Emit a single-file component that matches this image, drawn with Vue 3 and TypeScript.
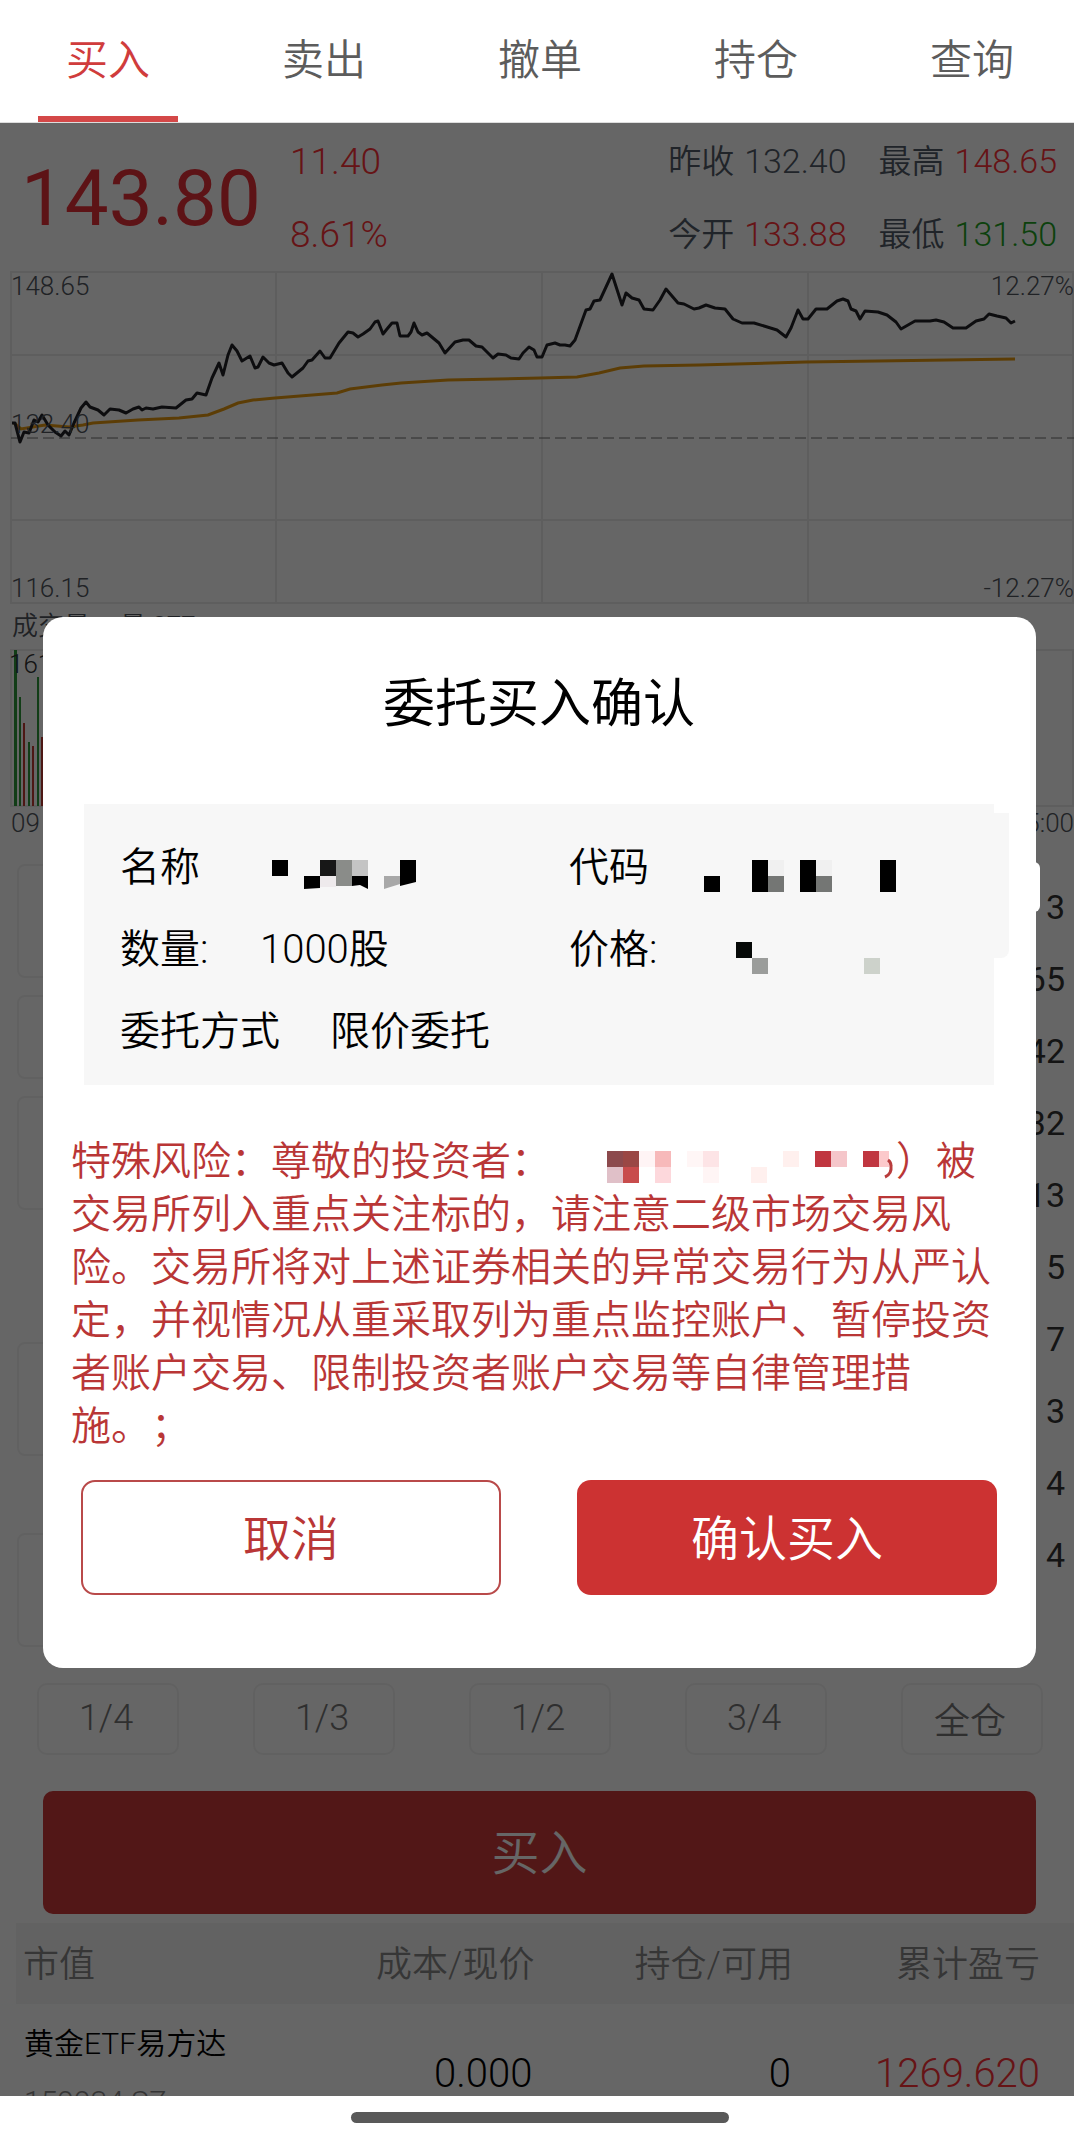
<script setup lang="ts">
import { ref } from 'vue'

interface Quote { label: string; value: string; tone: 'flat' | 'up' | 'down' }
interface Cell { x: number; y: number; w?: number; h?: number; fill: string }
interface Bar { x: number; w: number; top: number; up: boolean }

const tabs = ['买入', '卖出', '撤单', '持仓', '查询']
const activeTab = ref('买入')

const quotes: Quote[] = [
  { label: '昨收', value: '132.40', tone: 'flat' },
  { label: '最高', value: '148.65', tone: 'up' },
  { label: '今开', value: '133.88', tone: 'up' },
  { label: '最低', value: '131.50', tone: 'down' },
]

const priceLine =
  '12,163 15,163 20,182 24,172 29,173 34,160 38,162 42,155 48,165 55,172 61,176 65,171 69,175 74,163 81,148 86,142 90,147 98,150 104,155 110,149 119,150 126,153 133,149 139,147 142,150 146,148 153,149 162,147 176,148 186,140 192,139 197,133 206,135 212,118 219,103 223,115 228,95 232,85 237,91 242,101 250,96 255,108 258,107 263,97 269,103 274,105 282,103 288,113 292,117 303,108 308,101 312,100 320,91 325,98 330,98 339,83 348,72 353,73 358,77 363,74 370,69 375,62 378,61 383,74 387,69 392,63 397,63 400,76 408,76 411,72 414,63 418,72 422,75 427,73 439,83 445,93 455,82 463,80 469,80 476,86 482,87 493,98 498,94 506,95 511,98 519,99 523,93 529,87 534,90 537,97 542,97 547,85 555,83 560,85 565,85 570,86 575,80 586,50 590,49 594,41 600,40 612,14 622,45 626,33 632,38 639,40 644,49 653,50 660,40 666,29 678,43 684,44 694,49 699,48 706,45 715,48 725,49 733,59 742,63 754,63 777,70 786,77 791,68 798,50 803,59 808,59 816,49 827,49 837,41 843,39 848,41 851,49 856,51 860,59 865,51 878,52 887,55 896,62 901,69 915,61 930,61 936,60 944,62 953,68 966,68 976,61 984,59 989,54 997,56 1006,58 1011,63 1015,61'
const averageLine =
  '14,163 21,169 45,165 69,167 83,165 93,163 138,160 179,158 208,155 224,149 238,143 253,140 275,138 337,133 350,129 382,125 401,123 448,120 540,118 577,117 599,113 620,108 644,106 699,105 806,102 878,101 1015,99'

const bars: Bar[] = [
  { x: 14, w: 3, top: 4, up: false },
  { x: 19, w: 2, top: 51, up: false },
  { x: 23, w: 2, top: 77, up: true },
  { x: 28, w: 2, top: 96, up: false },
  { x: 32, w: 2, top: 100, up: true },
  { x: 37, w: 2, top: 31, up: false },
  { x: 41, w: 2, top: 91, up: true },
]

const depth = ['3', '65', '42', '32', '13', '5', '7', '3', '4', '4']
const fractions = ['1/4', '1/3', '1/2', '3/4', '全仓']

const nameMask: Cell[] = [
  { x: 0, y: 0, fill: '#000' },
  { x: 48, y: 0, fill: '#171717' },
  { x: 64, y: 0, h: 26, fill: '#8a8c89' },
  { x: 80, y: 0, fill: '#c4c4c4' },
  { x: 48, y: 16, h: 11, fill: '#eeeaec' },
]
const codeMask: Cell[] = [
  { x: 0, y: 16, fill: '#000' },
  { x: 48, y: 0, h: 32, fill: '#000' },
  { x: 64, y: 0, fill: '#f0f0f0' },
  { x: 64, y: 16, fill: '#747674' },
  { x: 96, y: 0, h: 32, fill: '#000' },
  { x: 112, y: 0, fill: '#f0f0f0' },
  { x: 112, y: 16, fill: '#747674' },
  { x: 176, y: 0, h: 32, fill: '#000' },
]
const priceMask: Cell[] = [
  { x: 32, y: 0, fill: '#060908' },
  { x: 48, y: 16, fill: '#9b9d9b' },
  { x: 160, y: 16, fill: '#cdd2cb' },
]
const riskMask: Cell[] = [
  { x: 56, y: 0, fill: '#8c4a4d' },
  { x: 72, y: 0, fill: '#9a4744' },
  { x: 56, y: 16, fill: '#e0c0c8' },
  { x: 72, y: 16, fill: '#c84c4c' },
  { x: 88, y: 0, fill: '#fff4f5' },
  { x: 104, y: 0, fill: '#f7b9ba' },
  { x: 104, y: 16, fill: '#fdd8dc' },
  { x: 136, y: 0, fill: '#fff6f6' },
  { x: 152, y: 0, fill: '#fde4e6' },
  { x: 152, y: 16, fill: '#fff5f5' },
  { x: 200, y: 16, fill: '#fff0ee' },
  { x: 232, y: 0, fill: '#fff0ee' },
  { x: 264, y: 0, fill: '#c03640' },
  { x: 280, y: 0, fill: '#f5c6ca' },
  { x: 312, y: 0, fill: '#c03640' },
  { x: 328, y: 0, w: 10, fill: '#fcc9cb' },
]
</script>

<template>
  <div class="app">
    <nav class="tabs">
      <button
        v-for="tab in tabs"
        :key="tab"
        type="button"
        class="tab"
        :class="{ active: tab === activeTab }"
        @click="activeTab = tab"
      >{{ tab }}</button>
    </nav>

    <main class="stage">
      <section class="quote">
        <strong class="last">143.80</strong>
        <div class="change"><span>11.40</span><span>8.61%</span></div>
        <dl class="stats">
          <div v-for="q in quotes" :key="q.label" class="stat">
            <dt>{{ q.label }}</dt>
            <dd :class="q.tone">{{ q.value }}</dd>
          </div>
        </dl>
      </section>

      <section class="chart">
        <svg viewBox="0 0 1074 346" fill="none">
          <g stroke="#ebebeb" stroke-width="2">
            <path d="M11 12H1073V343H11ZM11 95H1073M11 260H1073M276 12V343M542 12V343M808 12V343" />
          </g>
          <path d="M11 178H1074" stroke="#707070" stroke-width="1" stroke-dasharray="11 5" />
          <polyline :points="averageLine" stroke="#e79a10" stroke-width="3" />
          <polyline :points="priceLine" stroke="#222226" stroke-width="3" stroke-linejoin="round" />
        </svg>
        <span class="axis top-left">148.65</span>
        <span class="axis mid-left">132.40</span>
        <span class="axis bottom-left">116.15</span>
        <span class="axis top-right">12.27%</span>
        <span class="axis bottom-right">-12.27%</span>
      </section>

      <section class="volume">
        <div class="volume-title"><span>成交量</span><span>量 277</span></div>
        <div class="volume-plot">
          <svg viewBox="0 0 1074 164" fill="none">
            <path d="M11 4H1073V160H11Z" stroke="#ebebeb" stroke-width="2" />
            <rect
              v-for="b in bars"
              :key="b.x"
              :x="b.x"
              :y="b.top"
              :width="b.w"
              :height="160 - b.top"
              :fill="b.up ? '#c03a34' : '#2f9a3a'"
            />
          </svg>
          <span class="axis volume-max">161</span>
        </div>
        <div class="times"><span>09</span><span>15:00</span></div>
      </section>

      <section class="trade">
        <div class="form">
          <div class="field tall"></div>
          <div class="field short"></div>
          <div class="field tall"></div>
          <div class="field tall spaced"></div>
          <div class="field tall last-field"></div>
        </div>
        <ol class="depth">
          <li v-for="(d, i) in depth" :key="i">{{ d }}</li>
        </ol>
      </section>

      <div class="fractions">
        <button v-for="f in fractions" :key="f" type="button">{{ f }}</button>
      </div>

      <button type="button" class="buy">买入</button>

      <table class="holdings">
        <thead>
          <tr><th>市值</th><th>成本/现价</th><th>持仓/可用</th><th>累计盈亏</th></tr>
        </thead>
        <tbody>
          <tr>
            <td><div class="fund">黄金ETF易方达</div><div class="ticker">159934.SZ</div></td>
            <td>0.000</td>
            <td>0</td>
            <td class="up">1269.620</td>
          </tr>
        </tbody>
      </table>

      <div class="overlay">
        <div class="dialog" role="dialog" aria-modal="true" aria-labelledby="dialog-title">
          <h2 id="dialog-title">委托买入确认</h2>

          <div class="order">
            <div class="row">
              <div class="item">
                <span>名称</span>
                <svg class="mask name-mask" width="144" height="32" viewBox="0 0 144 32">
                  <rect v-for="(c, i) in nameMask" :key="i" :x="c.x" :y="c.y" :width="c.w ?? 16" :height="c.h ?? 16" :fill="c.fill" />
                  <path d="M32 16H48V28L32 29Z" />
                  <path d="M80 16H96V29L88 25L80 26Z" />
                  <path d="M112 16H128V24L112 29Z" fill="#a8a8a8" />
                  <path d="M128 0H144V22L128 26Z" />
                </svg>
              </div>
              <div class="item">
                <span>代码</span>
                <svg class="mask code-mask" width="192" height="32" viewBox="0 0 192 32">
                  <rect v-for="(c, i) in codeMask" :key="i" :x="c.x" :y="c.y" :width="c.w ?? 16" :height="c.h ?? 16" :fill="c.fill" />
                </svg>
              </div>
            </div>
            <div class="row">
              <div class="item"><span class="label">数量:</span><span>1000股</span></div>
              <div class="item">
                <span>价格:</span>
                <svg class="mask price-mask" width="176" height="32" viewBox="0 0 176 32">
                  <rect v-for="(c, i) in priceMask" :key="i" :x="c.x" :y="c.y" :width="c.w ?? 16" :height="c.h ?? 16" :fill="c.fill" />
                </svg>
              </div>
            </div>
            <div class="row">
              <div class="item method"><span>委托方式</span><span>限价委托</span></div>
            </div>
          </div>

          <p class="risk">特殊风险：尊敬的投资者：<svg class="risk-mask" width="345" height="32" viewBox="0 0 345 32"><rect v-for="(c, i) in riskMask" :key="i" :x="c.x" :y="c.y" :width="c.w ?? 16" :height="c.h ?? 16" :fill="c.fill" /><path d="M334 26Q341 23 340 15Q340 11 337 9" fill="none" stroke="#b93c3c" stroke-width="3" /></svg>）被交易所列入重点关注标的，请注意二级市场交易风险。交易所将对上述证券相关的异常交易行为从严认定，并视情况从重采取列为重点监控账户、暂停投资者账户交易、限制投资者账户交易等自律管理措施。；</p>

          <div class="actions">
            <button type="button" class="cancel">取消</button>
            <button type="button" class="confirm">确认买入</button>
          </div>
        </div>
      </div>
    </main>

    <footer class="home"><span class="home-bar"></span></footer>
  </div>
</template>

<style>
body {
  margin: 0;
  background: #fff;
}
</style>

<style scoped>
* {
  box-sizing: border-box;
}

.app {
  display: flex;
  flex-direction: column;
  height: 100vh;
  overflow: hidden;
  background: #fff;
  font-family: Roboto, "Noto Sans CJK SC", sans-serif;
  font-weight: 350;
  color: #000;
}

button {
  padding: 0;
  border: 0;
  background: none;
  font: inherit;
  color: inherit;
}

.tabs {
  display: flex;
  flex: none;
  justify-content: space-between;
  height: 123px;
  padding: 0 32px 0 38px;
  border-bottom: 1px solid #ddd;
}

.tab {
  width: 140px;
  padding-bottom: 4px;
  border-bottom: 6px solid transparent;
  font-size: 42px;
  color: #5c5c5c;
}

.tab.active {
  border-color: #d44848;
  color: #d03c3c;
}

.stage {
  position: relative;
  flex: 1;
  min-height: 0;
  overflow: hidden;
}

.quote {
  display: flex;
  align-items: flex-start;
  height: 137px;
  padding: 2px 17px 0 21px;
}

.last {
  width: 269px;
  font-size: 78px;
  font-weight: 400;
  line-height: 148px;
  color: #e83038;
}

.change {
  display: flex;
  flex-direction: column;
  font-size: 37px;
  line-height: 73px;
  color: #ff3238;
}

.stats {
  display: grid;
  grid-template-columns: auto auto;
  column-gap: 32px;
  margin: 0 0 0 auto;
  font-size: 34px;
  line-height: 73px;
  color: #525b68;
}

.stat {
  display: flex;
  gap: 10px;
}

dt {
  font-size: 33px;
}

dd {
  margin: 0;
}

.up {
  color: #ff3238;
}

.down {
  color: #22a322;
}

.chart,
.volume-plot {
  position: relative;
}

.chart svg,
.volume-plot svg {
  display: block;
  width: 100%;
}

.axis {
  position: absolute;
  font-size: 26px;
  line-height: 32px;
  color: #50555c;
}

.top-left {
  top: 10px;
  left: 11px;
}

.mid-left {
  top: 148px;
  left: 11px;
}

.bottom-left {
  bottom: 2px;
  left: 11px;
}

.top-right {
  top: 10px;
  right: 0;
}

.bottom-right {
  right: 0;
  bottom: 2px;
}

.volume-title {
  display: flex;
  gap: 30px;
  height: 40px;
  padding-left: 12px;
  font-size: 26px;
  line-height: 40px;
  color: #50555c;
}

.volume-max {
  top: 2px;
  left: 9px;
  color: #333;
}

.times {
  display: flex;
  justify-content: space-between;
  height: 30px;
  padding: 0 0 0 11px;
  font-size: 26px;
  line-height: 26px;
  color: #50555c;
}

.trade {
  display: flex;
  justify-content: space-between;
  padding: 24px 9px 0 17px;
}

.form {
  display: flex;
  flex-direction: column;
  gap: 17px;
  width: 56%;
}

.field {
  border: 2px solid #f3f3f3;
  border-radius: 8px;
}

.tall {
  height: 114px;
}

.short {
  height: 84px;
}

.spaced {
  margin-top: 115px;
}

.last-field {
  margin-top: 60px;
}

.depth {
  margin: 7px 0 0;
  padding: 0;
  list-style: none;
  font-size: 34px;
  font-weight: 400;
  line-height: 72px;
  text-align: right;
  color: #333;
}

.fractions {
  display: flex;
  justify-content: space-between;
  padding: 36px 31px 36px 37px;
}

.fractions button {
  width: 142px;
  height: 72px;
  padding: 0 4px 2px 0;
  border: 2px solid #f3f3f3;
  border-radius: 10px;
  font-size: 36px;
  color: #777;
}

.buy {
  display: block;
  width: calc(100% - 81px);
  height: 123px;
  margin: 0 38px 9px 43px;
  padding-bottom: 8px;
  border-radius: 10px;
  background: #cc3a3a;
  font-size: 48px;
  color: #fff;
}

.holdings {
  width: calc(100% - 16px);
  margin-left: 16px;
  border-collapse: collapse;
  table-layout: fixed;
}

.holdings th {
  width: 24%;
  height: 81px;
  padding: 2px 0 0;
  background: #f6f6f6;
  font-size: 36px;
  font-weight: 350;
  line-height: 48px;
  text-align: right;
  color: #888;
}

.holdings th:first-child {
  width: 25%;
  padding-left: 7px;
  text-align: left;
}

.holdings th:nth-child(3) {
  width: 25%;
  padding-right: 6px;
}

.holdings th:last-child {
  width: 26%;
  padding-right: 34px;
}

.holdings td {
  padding: 46px 2px 0 0;
  font-size: 40px;
  line-height: 48px;
  text-align: right;
  vertical-align: top;
}

.holdings td:first-child {
  padding: 22px 0 0 8px;
  font-size: 30px;
  line-height: 36px;
  text-align: left;
}

.holdings td:nth-child(3) {
  padding-right: 8px;
}

.holdings td:last-child {
  padding-right: 34px;
}

.fund {
  margin-bottom: 22px;
}

.ticker {
  color: #888;
}

.overlay {
  position: absolute;
  inset: 0;
  padding: 494px 38px 0 43px;
  background: rgba(0, 0, 0, 0.6);
}

.dialog {
  position: relative;
  padding: 48px 39px 73px 38px;
  border-radius: 20px;
  background: #fff;
}

.dialog::after {
  position: absolute;
  top: 245px;
  right: -4px;
  width: 12px;
  height: 50px;
  border-radius: 6px;
  background: #fff;
  content: "";
}

h2 {
  margin: 0 0 59px;
  font-size: 52px;
  font-weight: 400;
  line-height: 80px;
  text-align: center;
}

.order {
  position: relative;
  margin: 0 3px;
  padding: 23px 38px 12px 36px;
  background: #f7f7f7;
  font-size: 40px;
  line-height: 82px;
}

.order::before {
  position: absolute;
  top: 9px;
  right: -15px;
  width: 16px;
  height: 145px;
  border-radius: 0 0 8px;
  background: #f7f7f7;
  content: "";
}

.row {
  display: grid;
  grid-template-columns: 449fr 387fr;
}

.item {
  display: flex;
  align-items: center;
  white-space: nowrap;
}

.label {
  width: 140px;
}

.method {
  gap: 50px;
}

.mask {
  display: block;
  flex: none;
  margin-top: 16px;
}

.name-mask {
  margin-left: 72px;
}

.code-mask {
  margin-left: 55px;
}

.price-mask {
  margin-left: 47px;
}

.risk {
  margin: 50px -6px 27px -10px;
  font-size: 40px;
  line-height: 53px;
  text-spacing-trim: space-all;
  color: #b93636;
}

.risk-mask {
  vertical-align: -8px;
}

.actions {
  display: flex;
  gap: 76px;
}

.actions button {
  width: 50%;
  height: 115px;
  padding-bottom: 6px;
  border-radius: 14px;
  font-size: 48px;
}

.actions .cancel {
  border: 2px solid #b94a4a;
  color: #b93636;
}

.actions .confirm {
  background: #cc3232;
  color: #fff;
}

.home {
  display: flex;
  flex: none;
  align-items: center;
  justify-content: center;
  height: 43px;
  padding: 0 0 0 6px;
  background: #fff;
}

.home-bar {
  width: 378px;
  height: 11px;
  border-radius: 6px;
  background: #595959;
}
</style>
